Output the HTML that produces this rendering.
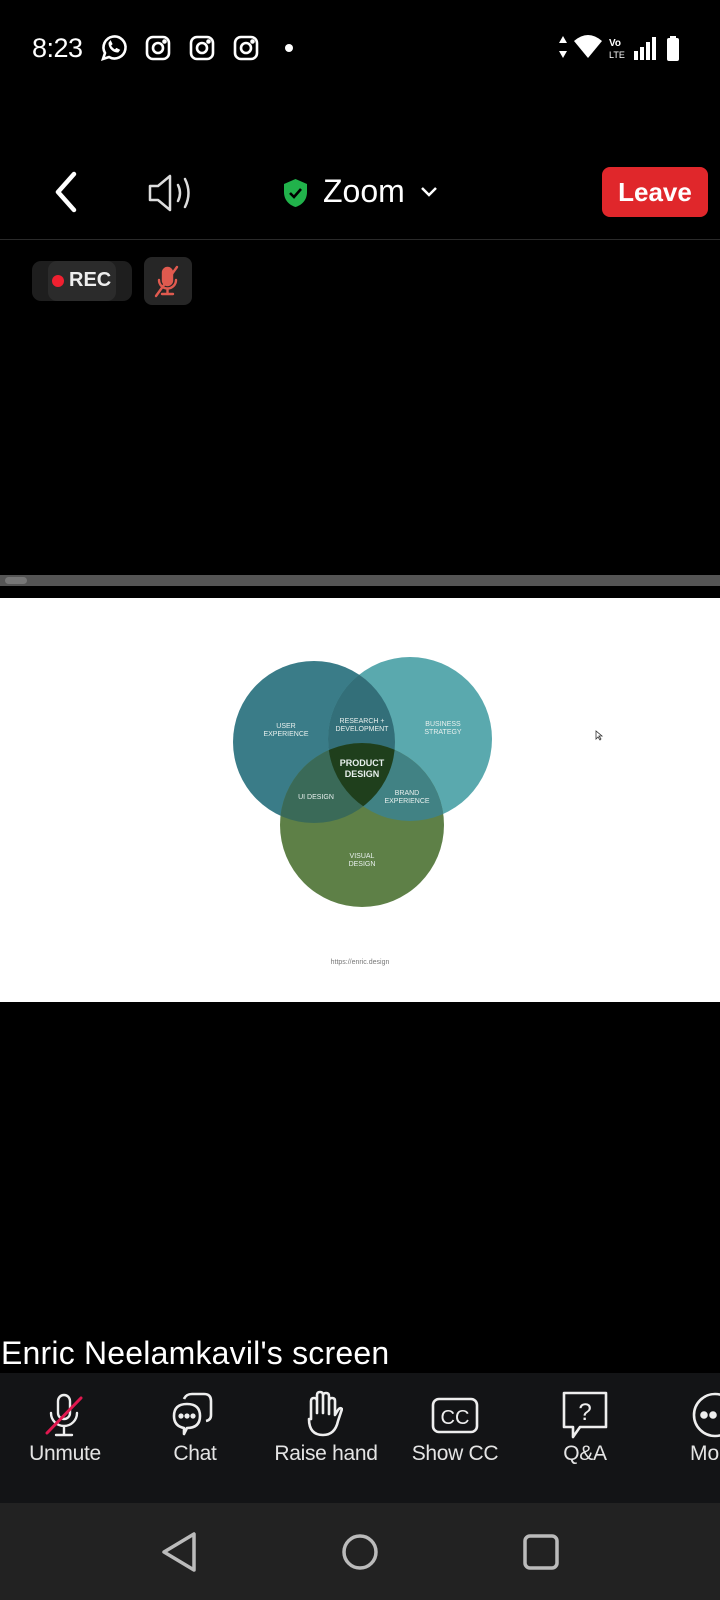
<!DOCTYPE html>
<html><head><meta charset="utf-8">
<style>
*{margin:0;padding:0;box-sizing:border-box}
body{width:720px;height:1600px;background:#000;position:relative;overflow:hidden;font-family:"Liberation Sans",sans-serif;color:#fff}
.a{position:absolute}
.lbl{position:absolute;top:1442px;font-size:21px;color:#e4e4e4;transform:translateX(-50%);white-space:nowrap;letter-spacing:-0.3px}
</style></head><body>
<div class="a" style="left:32px;top:33px;font-size:27px;letter-spacing:-0.5px">8:23</div>
<svg class="a" style="left:97px;top:32px" width="32" height="32" viewBox="0 0 32 32" fill="none" stroke="#fff" stroke-width="2.6"><path d="M6 27l2-6a11 11 0 1 1 4 4z"/><path d="M12 11c0 5 4 9 9 9l1.5-2-3-1.5-1.5 1.5c-2-1-3.5-2.5-4.5-4.5l1.5-1.5-1.5-3z" fill="#fff" stroke-width="1"/></svg>
<svg class="a" style="left:145px;top:35px" width="26" height="26" viewBox="0 0 26 26" fill="none" stroke="#fff" stroke-width="2.6"><rect x="2" y="2" width="22" height="22" rx="6"/><circle cx="13" cy="13" r="5"/><circle cx="19.5" cy="6.5" r="1" fill="#fff"/></svg>
<svg class="a" style="left:189px;top:35px" width="26" height="26" viewBox="0 0 26 26" fill="none" stroke="#fff" stroke-width="2.6"><rect x="2" y="2" width="22" height="22" rx="6"/><circle cx="13" cy="13" r="5"/><circle cx="19.5" cy="6.5" r="1" fill="#fff"/></svg>
<svg class="a" style="left:233px;top:35px" width="26" height="26" viewBox="0 0 26 26" fill="none" stroke="#fff" stroke-width="2.6"><rect x="2" y="2" width="22" height="22" rx="6"/><circle cx="13" cy="13" r="5"/><circle cx="19.5" cy="6.5" r="1" fill="#fff"/></svg>
<div class="a" style="left:285px;top:44px;width:8px;height:8px;border-radius:50%;background:#fff"></div>
<svg class="a" style="left:558px;top:34px" width="130" height="30" viewBox="0 0 130 30" fill="#fff"><path d="M1 9l4-7 4 7zM1 17l4 7 4-7z"/><path d="M16 7q14-12 28 0l-14 17z"/><text x="51" y="12" font-size="10" font-family="Liberation Sans" font-weight="bold">Vo</text><text x="51" y="24" font-size="9" font-family="Liberation Sans">LTE</text><rect x="76" y="17" width="4" height="9"/><rect x="82" y="13" width="4" height="13"/><rect x="88" y="8" width="4" height="18"/><rect x="94" y="3" width="4" height="23"/><rect x="112" y="2" width="6" height="3"/><rect x="109" y="4" width="12" height="23" rx="2"/></svg>
<svg class="a" style="left:52px;top:170px" width="28" height="44" viewBox="0 0 28 44" fill="none" stroke="#fff" stroke-width="4.5" stroke-linecap="round" stroke-linejoin="round"><path d="M22 4L6 22l16 18"/></svg>
<svg class="a" style="left:147px;top:172px" width="50" height="42" viewBox="0 0 50 42" fill="none" stroke="#ddd" stroke-width="2.5" stroke-linejoin="round" stroke-linecap="round"><path d="M3 14h8l12-10v34L11 28H3z"/><path d="M31 13q4 8 0 16M38 7q7 14 0 28"/></svg>
<svg class="a" style="left:282px;top:178px" width="27" height="30" viewBox="0 0 27 30"><path d="M13.5 1L25 6v8c0 8-5 13-11.5 15C7 27 2 22 2 14V6z" fill="#21b24b"/><path d="M8 15l4 4 7-8" fill="none" stroke="#000" stroke-width="2.6"/></svg>
<div class="a" style="left:323px;top:173px;font-size:32px">Zoom</div>
<svg class="a" style="left:420px;top:186px" width="18" height="12" viewBox="0 0 18 12" fill="none" stroke="#fff" stroke-width="2.5"><path d="M2 2l7 7 7-7"/></svg>
<div class="a" style="left:602px;top:167px;width:106px;height:50px;background:#e0272b;border-radius:8px;font-size:26px;font-weight:bold;text-align:center;line-height:50px">Leave</div>
<div class="a" style="left:0;top:239px;width:720px;height:1px;background:#2a2a2a"></div>
<div class="a" style="left:32px;top:261px;width:100px;height:40px;background:#1e1e1e;border-radius:9px"></div>
<div class="a" style="left:48px;top:261px;width:68px;height:40px;background:#2b2b2b;border-radius:9px"></div>
<div class="a" style="left:52px;top:275px;width:12px;height:12px;border-radius:50%;background:#f02030"></div>
<div class="a" style="left:69px;top:269px;font-size:20px;font-weight:bold;color:#eee">REC</div>
<div class="a" style="left:144px;top:257px;width:48px;height:48px;background:#262626;border-radius:8px"></div>
<svg class="a" style="left:150px;top:263px" width="36" height="36" viewBox="0 0 36 36" fill="none" stroke="#e05a4f" stroke-width="2.4" stroke-linecap="round"><rect x="13" y="5" width="9" height="17" rx="4.5" fill="#e05a4f"/><path d="M9 17a8.5 8.5 0 0 0 17 0M17.5 26v5M12 31h11M27 4L6 33"/></svg>
<div class="a" style="left:0;top:575px;width:720px;height:11px;background:#555"></div>
<div class="a" style="left:5px;top:577px;width:22px;height:7px;background:#777;border-radius:4px"></div>
<div class="a" style="left:0;top:598px;width:720px;height:404px;background:#fff"></div>
<svg class="a" style="left:0;top:598px" width="720" height="404" viewBox="0 598 720 404">
<defs>
<clipPath id="cb"><circle cx="314" cy="742" r="81"/></clipPath>
<clipPath id="ct"><circle cx="410" cy="739" r="82"/></clipPath>
<clipPath id="cg"><circle cx="362" cy="825" r="82"/></clipPath>
</defs>
<circle cx="314" cy="742" r="81" fill="#3a7c88"/>
<circle cx="410" cy="739" r="82" fill="#5aa9ae"/>
<circle cx="362" cy="825" r="82" fill="#5e8047"/>
<circle cx="410" cy="739" r="82" fill="#336f79" clip-path="url(#cb)"/>
<circle cx="362" cy="825" r="82" fill="#3a6a58" clip-path="url(#cb)"/>
<circle cx="362" cy="825" r="82" fill="#418284" clip-path="url(#ct)"/>
<g clip-path="url(#cb)"><circle cx="410" cy="739" r="82" fill="#1f3f1c" clip-path="url(#cg)"/></g>
<g font-family="Liberation Sans" fill="#e8f0ee" font-size="7" text-anchor="middle">
<text x="286" y="728">USER</text><text x="286" y="736">EXPERIENCE</text>
<text x="362" y="723">RESEARCH +</text><text x="362" y="731">DEVELOPMENT</text>
<text x="443" y="726">BUSINESS</text><text x="443" y="734">STRATEGY</text>
<text x="316" y="799">UI DESIGN</text>
<text x="407" y="795">BRAND</text><text x="407" y="803">EXPERIENCE</text>
<text x="362" y="858">VISUAL</text><text x="362" y="866">DESIGN</text>
<text x="362" y="766" font-size="9" font-weight="bold">PRODUCT</text><text x="362" y="777" font-size="9" font-weight="bold">DESIGN</text>
<text x="360" y="964" fill="#777" font-size="7">https://enric.design</text>
</g>
<path d="M596 731l0 8 2-2 2 3 1-1-2-3 3 0z" fill="#fff" stroke="#333" stroke-width="0.8"/>
</svg>
<div class="a" style="left:1px;top:1335px;font-size:32px;letter-spacing:0.2px">Enric Neelamkavil's screen</div>
<div class="a" style="left:0;top:1373px;width:720px;height:130px;background:#131416"></div>
<svg class="a" style="left:44px;top:1393px" width="40" height="46" viewBox="0 0 40 46" fill="none" stroke="#eee" stroke-width="2.4" stroke-linecap="round"><rect x="14" y="2" width="12" height="24" rx="6"/><path d="M7 20a13 13 0 0 0 26 0M20 33v8M12 42h16"/><path d="M37 5L3 40" stroke="#e0184f" stroke-width="3"/></svg>
<svg class="a" style="left:170px;top:1392px" width="48" height="48" viewBox="0 0 48 48" fill="none" stroke="#eee" stroke-width="2.6" stroke-linejoin="round"><path d="M14 7q2-5 8-5h12q7 0 7 7v14q0 5-5 6"/><path d="M4 24q0-12 13-12t13 12-13 12l-3 6v-6q-10-2-10-12z"/><circle cx="11" cy="24" r="1.3" fill="#eee"/><circle cx="17" cy="24" r="1.3" fill="#eee"/><circle cx="23" cy="24" r="1.3" fill="#eee"/></svg>
<svg class="a" style="left:303px;top:1389px" width="40" height="50" viewBox="0 0 40 50" fill="none" stroke="#eee" stroke-width="2.6" stroke-linejoin="round" stroke-linecap="round"><path d="M8 30V12q0-3 3-3t3 3V24V6q0-3 3-3t3 3v18V7q0-3 3-3t3 3v18V12q0-3 3-3t3 3v14l3-5q2-3 4-1l-4 12q-3 14-15 14-14 0-14-16z"/></svg>
<svg class="a" style="left:431px;top:1396px" width="48" height="40" viewBox="0 0 48 40" fill="none" stroke="#eee" stroke-width="2.6"><rect x="2" y="3" width="44" height="33" rx="6"/><text x="24" y="28" font-family="Liberation Sans" font-size="20" fill="#eee" stroke="none" text-anchor="middle">CC</text></svg>
<svg class="a" style="left:562px;top:1391px" width="46" height="48" viewBox="0 0 46 48" fill="none" stroke="#eee" stroke-width="2.6" stroke-linejoin="round"><path d="M2 2h42v34H18l-7 10v-10H2z"/><text x="23" y="29" font-family="Liberation Sans" font-size="24" fill="#eee" stroke="none" text-anchor="middle">?</text></svg>
<svg class="a" style="left:690px;top:1392px" width="30" height="46" viewBox="0 0 30 46" fill="none" stroke="#eee" stroke-width="2.6"><circle cx="25" cy="23" r="21"/><circle cx="14" cy="23" r="2.5" fill="#eee"/><circle cx="23" cy="23" r="2.5" fill="#eee"/></svg>
<div class="lbl" style="left:65px">Unmute</div>
<div class="lbl" style="left:195px">Chat</div>
<div class="lbl" style="left:326px">Raise hand</div>
<div class="lbl" style="left:455px">Show CC</div>
<div class="lbl" style="left:585px">Q&amp;A</div>
<div class="a" style="left:690px;top:1442px;font-size:21px;color:#e4e4e4">Mo</div>
<div class="a" style="left:0;top:1503px;width:720px;height:97px;background:#222"></div>
<svg class="a" style="left:160px;top:1530px" width="40" height="44" viewBox="0 0 40 44" fill="none" stroke="#bbb" stroke-width="3.5" stroke-linejoin="round"><path d="M34 4v36L4 22z"/></svg>
<svg class="a" style="left:340px;top:1532px" width="40" height="40" viewBox="0 0 40 40" fill="none" stroke="#bbb" stroke-width="3.5"><circle cx="20" cy="20" r="16"/></svg>
<svg class="a" style="left:521px;top:1532px" width="40" height="40" viewBox="0 0 40 40" fill="none" stroke="#bbb" stroke-width="3.5"><rect x="4" y="4" width="32" height="32" rx="5"/></svg>
</body></html>
